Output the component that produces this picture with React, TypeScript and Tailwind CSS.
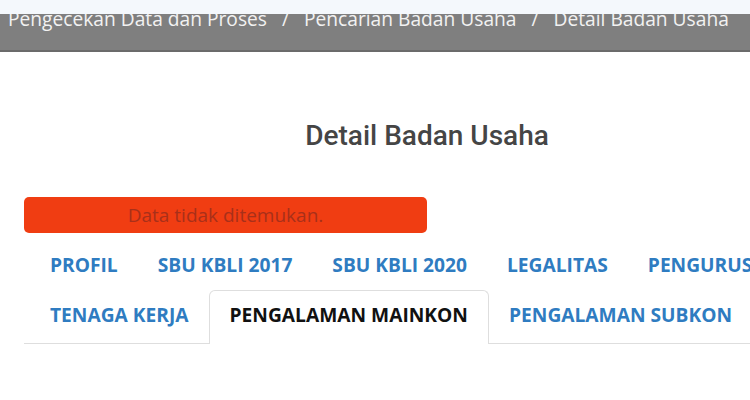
import React from "react";

const rowA = ["PROFIL", "SBU KBLI 2017", "SBU KBLI 2020", "LEGALITAS", "PENGURUS"];
const rowB = ["TENAGA KERJA", "PENGALAMAN MAINKON", "PENGALAMAN SUBKON"];

export default function App() {
  return (
    <div className="w-[750px] h-[400px] overflow-hidden bg-white relative" style={{ fontFamily: '"Open Sans", sans-serif' }}>
      <div className="h-[14px] bg-[#f4f8fc]" />
      <div className="h-[38px] bg-[#7f7f7f] border-b-2 border-[#6b6b6b] relative overflow-hidden">
        <div className="absolute left-[8px] top-[-10px] whitespace-nowrap text-[19.2px] text-[#f2f2f2] leading-[30px] flex">
          <span>Pengecekan Data dan Proses</span>
          <span className="mx-[15px]">/</span>
          <span>Pencarian Badan Usaha</span>
          <span className="mx-[15px]">/</span>
          <span>Detail Badan Usaha</span>
        </div>
      </div>
      <div className="pl-[24px] w-[830px]">
        <h1 className="text-center pt-[66px] text-[28px] leading-[36px] text-[#454545] font-medium" style={{ fontFamily: "Roboto, sans-serif" }}>
          Detail Badan Usaha
        </h1>
        <div className="mt-[43px] w-[403px] h-[36px] rounded-[5px] bg-[#f03d12] flex items-center justify-center text-[19px] text-[#a8301a]">
          Data tidak ditemukan.
        </div>
        <div className="mt-[7px] border-b border-[#dedede] pl-[6px]">
          <div className="flex h-[50px]">
            {rowA.map((t) => (
              <div key={t} className="px-[20px] flex items-center font-bold text-[19.2px] text-[#2f7cc1] whitespace-nowrap">{t}</div>
            ))}
          </div>
          <div className="flex h-[53px]">
            {rowB.map((t) => (
              <div
                key={t}
                className={
                  "px-[20px] pb-[4px] flex items-center font-bold text-[19.2px] whitespace-nowrap -mb-px " +
                  (t === "PENGALAMAN MAINKON"
                    ? "text-[#111] bg-white border border-b-0 border-[#dedede] rounded-t-[6px] px-[19px]"
                    : "text-[#2f7cc1]")
                }
              >
                {t}
              </div>
            ))}
          </div>
        </div>
      </div>
    </div>
  );
}
